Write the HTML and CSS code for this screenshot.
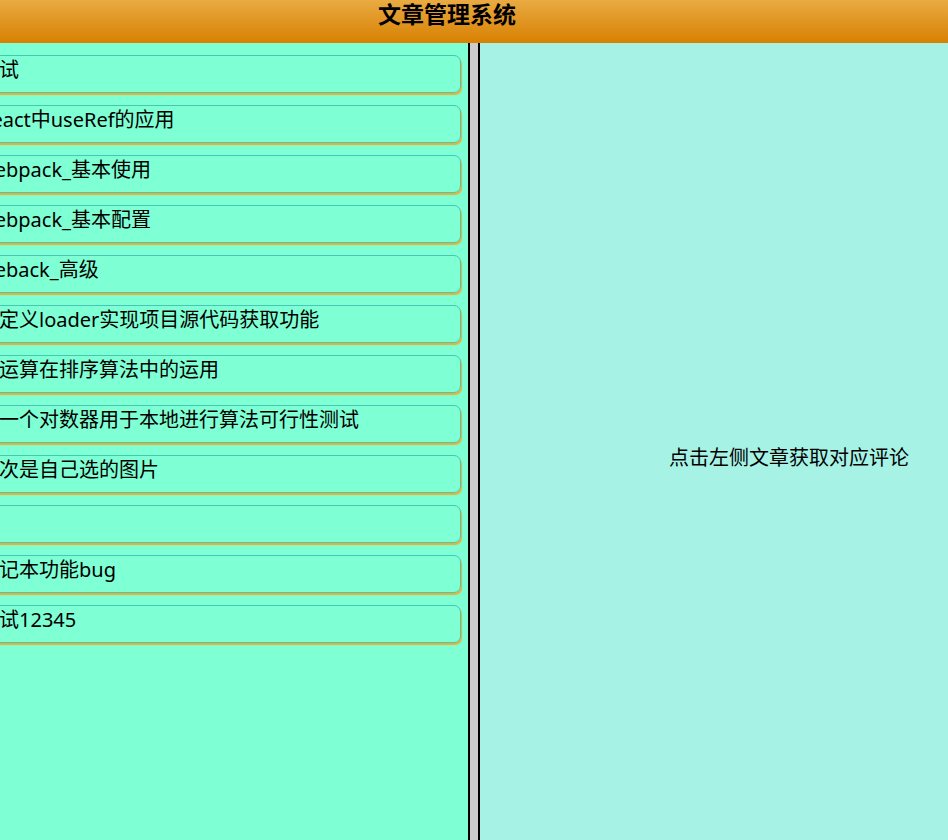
FILE: index.html
```html
<!DOCTYPE html>
<html lang="zh-CN">
<head>
  <meta charset="UTF-8" />
  <meta name="viewport" content="width=device-width, initial-scale=1.0"/>
  <title>文章管理系统</title>
  <link rel="stylesheet" href="styles.css">
</head>
<body>
  <header class="top-bar">
    <h1>文章管理系统</h1>
  </header>

  <div class="main">
    <div class="article-list">
      <div class="article-item">测试</div>
      <div class="article-item">React中useRef的应用</div>
      <div class="article-item">webpack_基本使用</div>
      <div class="article-item">webpack_基本配置</div>
      <div class="article-item">weback_高级</div>
      <div class="article-item">自定义loader实现项目源代码获取功能</div>
      <div class="article-item">位运算在排序算法中的运用</div>
      <div class="article-item">写一个对数器用于本地进行算法可行性测试</div>
      <div class="article-item">这次是自己选的图片</div>
      <div class="article-item"></div>
      <div class="article-item">笔记本功能bug</div>
      <div class="article-item">测试12345</div>
    </div>

    <div class="divider"></div>

    <div class="comment-panel">
      <p class="tip">点击左侧文章获取对应评论</p>
    </div>
  </div>
</body>
</html>
```

FILE: styles.css
```css
html, body {
  margin: 0;
  overflow: hidden;
}

body {
  font-family: "Noto Sans", "Noto Sans CJK SC", sans-serif;
  color: #000;
}

.top-bar {
  height: 43px;
  background: linear-gradient(to bottom, #e9ab42, #d88002);
  text-align: center;
  padding-right: 54px;
  box-sizing: border-box;
}

.top-bar h1 {
  margin: 0;
  font-size: 23px;
  line-height: 28px;
  font-weight: bold;
}

.main {
  display: flex;
  justify-content: center;
  height: 100vh;
}

.article-list {
  flex: 0 0 618px;
  background: #7fffd4;
  padding: 12px 7px 0 8px;
  box-sizing: border-box;
}

.article-item {
  height: 38px;
  box-sizing: border-box;
  margin-bottom: 12px;
  padding: 1px 0 0 120px;
  border: 1px solid #45c6b6;
  border-radius: 7px;
  box-shadow: 1px 2px 1px #f2ac2c;
  font-size: 20px;
  line-height: 26px;
  white-space: nowrap;
}

.divider {
  flex: 0 0 12px;
  box-sizing: border-box;
  background: #cccccc;
  border-left: 2px solid #000;
  border-right: 2px solid #000;
}

.comment-panel {
  flex: 0 0 618px;
  background: #a6f3e6;
  display: flex;
  align-items: center;
  justify-content: center;
  padding-bottom: 10px;
  box-sizing: border-box;
}

.tip {
  margin: 0;
  font-size: 20px;
  line-height: 26px;
}
```
